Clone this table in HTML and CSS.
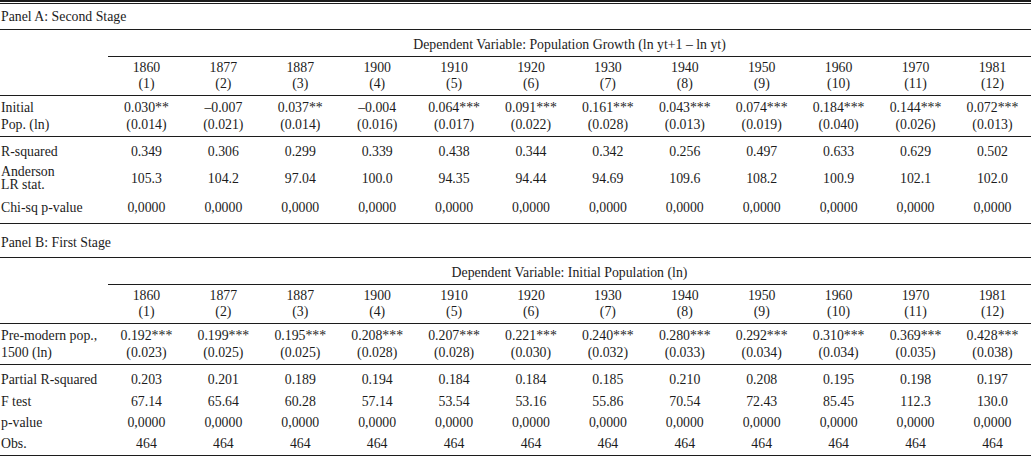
FILE: index.html
```html
<!DOCTYPE html>
<html>
<head>
<meta charset="utf-8">
<link rel="stylesheet" href="styles.css">
</head>
<body>
<table class="reg">
  <colgroup>
    <col class="c-label">
    <col span="12" class="c-num">
  </colgroup>
  <tbody>
    <tr class="top-rule"><td colspan="13"></td></tr>
    <tr class="panel"><td colspan="13">Panel A: Second Stage</td></tr>
    <tr class="depvar"><td class="blank"></td><td colspan="12" class="dv">Dependent Variable: Population Growth (ln yt+1 – ln yt)</td></tr>
    <tr class="years">
      <td></td>
      <td>1860<br>(1)</td><td>1877<br>(2)</td><td>1887<br>(3)</td><td>1900<br>(4)</td><td>1910<br>(5)</td><td>1920<br>(6)</td><td>1930<br>(7)</td><td>1940<br>(8)</td><td>1950<br>(9)</td><td>1960<br>(10)</td><td>1970<br>(11)</td><td>1981<br>(12)</td>
    </tr>
    <tr class="coef">
      <td class="lbl">Initial<br>Pop. (ln)</td>
      <td>0.030**<br>(0.014)</td><td>–0.007<br>(0.021)</td><td>0.037**<br>(0.014)</td><td>–0.004<br>(0.016)</td><td>0.064***<br>(0.017)</td><td>0.091***<br>(0.022)</td><td>0.161***<br>(0.028)</td><td>0.043***<br>(0.013)</td><td>0.074***<br>(0.019)</td><td>0.184***<br>(0.040)</td><td>0.144***<br>(0.026)</td><td>0.072***<br>(0.013)</td>
    </tr>
    <tr class="stat first">
      <td class="lbl">R-squared</td>
      <td>0.349</td><td>0.306</td><td>0.299</td><td>0.339</td><td>0.438</td><td>0.344</td><td>0.342</td><td>0.256</td><td>0.497</td><td>0.633</td><td>0.629</td><td>0.502</td>
    </tr>
    <tr class="stat two">
      <td class="lbl">Anderson<br>LR stat.</td>
      <td>105.3</td><td>104.2</td><td>97.04</td><td>100.0</td><td>94.35</td><td>94.44</td><td>94.69</td><td>109.6</td><td>108.2</td><td>100.9</td><td>102.1</td><td>102.0</td>
    </tr>
    <tr class="stat last">
      <td class="lbl">Chi-sq p-value</td>
      <td>0,0000</td><td>0,0000</td><td>0,0000</td><td>0,0000</td><td>0,0000</td><td>0,0000</td><td>0,0000</td><td>0,0000</td><td>0,0000</td><td>0,0000</td><td>0,0000</td><td>0,0000</td>
    </tr>
    <tr class="panel b"><td colspan="13">Panel B: First Stage</td></tr>
    <tr class="depvar"><td class="blank"></td><td colspan="12" class="dv">Dependent Variable: Initial Population (ln)</td></tr>
    <tr class="years">
      <td></td>
      <td>1860<br>(1)</td><td>1877<br>(2)</td><td>1887<br>(3)</td><td>1900<br>(4)</td><td>1910<br>(5)</td><td>1920<br>(6)</td><td>1930<br>(7)</td><td>1940<br>(8)</td><td>1950<br>(9)</td><td>1960<br>(10)</td><td>1970<br>(11)</td><td>1981<br>(12)</td>
    </tr>
    <tr class="coef">
      <td class="lbl">Pre-modern pop.,<br>1500 (ln)</td>
      <td>0.192***<br>(0.023)</td><td>0.199***<br>(0.025)</td><td>0.195***<br>(0.025)</td><td>0.208***<br>(0.028)</td><td>0.207***<br>(0.028)</td><td>0.221***<br>(0.030)</td><td>0.240***<br>(0.032)</td><td>0.280***<br>(0.033)</td><td>0.292***<br>(0.034)</td><td>0.310***<br>(0.034)</td><td>0.369***<br>(0.035)</td><td>0.428***<br>(0.038)</td>
    </tr>
    <tr class="row first">
      <td class="lbl">Partial R-squared</td>
      <td>0.203</td><td>0.201</td><td>0.189</td><td>0.194</td><td>0.184</td><td>0.184</td><td>0.185</td><td>0.210</td><td>0.208</td><td>0.195</td><td>0.198</td><td>0.197</td>
    </tr>
    <tr class="row">
      <td class="lbl">F test</td>
      <td>67.14</td><td>65.64</td><td>60.28</td><td>57.14</td><td>53.54</td><td>53.16</td><td>55.86</td><td>70.54</td><td>72.43</td><td>85.45</td><td>112.3</td><td>130.0</td>
    </tr>
    <tr class="row">
      <td class="lbl">p-value</td>
      <td>0,0000</td><td>0,0000</td><td>0,0000</td><td>0,0000</td><td>0,0000</td><td>0,0000</td><td>0,0000</td><td>0,0000</td><td>0,0000</td><td>0,0000</td><td>0,0000</td><td>0,0000</td>
    </tr>
    <tr class="row last">
      <td class="lbl">Obs.</td>
      <td>464</td><td>464</td><td>464</td><td>464</td><td>464</td><td>464</td><td>464</td><td>464</td><td>464</td><td>464</td><td>464</td><td>464</td>
    </tr>
  </tbody>
</table>
</body>
</html>
```

FILE: styles.css
```css
html, body {
  margin: 0;
  padding: 0;
  background: #ffffff;
}

.reg {
  width: 1031px;
  table-layout: fixed;
  border-collapse: collapse;
  font-family: "Liberation Serif", "Times New Roman", serif;
  font-size: 13.8px;
  color: #1c1c1c;
}

.c-label { width: 108px; }

.reg td {
  padding: 0;
  text-align: center;
  vertical-align: middle;
  line-height: 16px;
  white-space: nowrap;
}

.reg td.lbl {
  text-align: left;
  padding-left: 1px;
}

.top-rule td {
  height: 1px;
  border-top: 2px solid #1c1c1c;
  border-bottom: 1px solid #1c1c1c;
}

.panel td {
  text-align: left;
  height: 25px;
  padding-left: 1px;
  border-bottom: 1px solid #1c1c1c;
}

.panel.b td {
  height: 29px;
  padding-top: 4px;
}

.depvar td {
  height: 22px;
  padding-top: 4px;
}

.depvar td.dv {
  border-bottom: 1px solid #1c1c1c;
}

.years td {
  height: 38px;
  border-bottom: 1px solid #1c1c1c;
}

.coef td {
  height: 40px;
  line-height: 17px;
  border-bottom: 1px solid #1c1c1c;
}

.stat.first td {
  height: 26px;
  padding-top: 2px;
}

.stat.two td {
  height: 26px;
  line-height: 13px;
}

.stat.last td {
  height: 30px;
  padding-top: 2px;
  border-bottom: 1px solid #1c1c1c;
}

.row td {
  height: 21px;
}

.row.first td {
  height: 22px;
  padding-top: 4px;
}

.row.last td {
  height: 22px;
  border-bottom: 1px solid #1c1c1c;
}
```
